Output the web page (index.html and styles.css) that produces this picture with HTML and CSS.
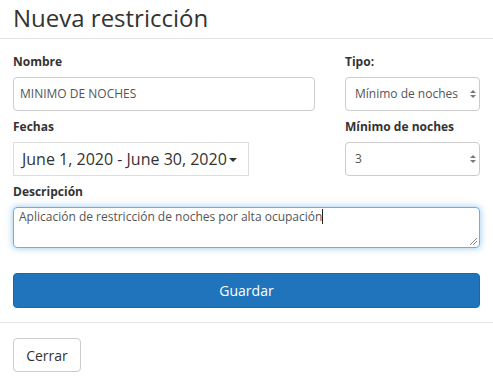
FILE: index.html
```html
<!DOCTYPE html>
<html>

<head>
    <meta charset="utf-8" />
    <title>Nueva restricción</title>
    <meta name="viewport" content="width=device-width, initial-scale=1">
    <link rel="stylesheet" href="styles.css">
</head>

<body>
    <div class="modal-header">
        <h2 class="modal-title">Nueva restricción</h2>
    </div>

    <div class="modal-body">
        <div class="form-row">
            <div class="form-group">
                <label class="lbl">Nombre</label>
                <div class="field">MINIMO DE NOCHES</div>
            </div>
            <div class="form-group">
                <label class="lbl">Tipo:</label>
                <div class="field select">
                    <span>Mínimo de noches</span>
                    <svg class="arrows" width="6" height="8" viewBox="0 0 6 8">
                        <path d="M3 0 L6 3 L0 3 Z" fill="#777" />
                        <path d="M0 5 L6 5 L3 8 Z" fill="#777" />
                    </svg>
                </div>
            </div>
        </div>

        <div class="form-row">
            <div class="form-group">
                <label class="lbl">Fechas</label>
                <div class="dates">
                    <span>June 1, 2020 - June 30, 2020</span><span class="caret"></span>
                </div>
            </div>
            <div class="form-group">
                <label class="lbl">Mínimo de noches</label>
                <div class="field select">
                    <span>3</span>
                    <svg class="arrows" width="6" height="8" viewBox="0 0 6 8">
                        <path d="M3 0 L6 3 L0 3 Z" fill="#777" />
                        <path d="M0 5 L6 5 L3 8 Z" fill="#777" />
                    </svg>
                </div>
            </div>
        </div>

        <div class="form-group">
            <label class="lbl">Descripción</label>
            <div class="textarea">Aplicación de restricción de noches por alta ocupación<span class="cursor"></span>
                <svg class="grip" width="8" height="8" viewBox="0 0 8 8">
                    <path d="M1 8 L8 1 M4 8 L8 4" stroke="#888" stroke-width="1" />
                </svg>
            </div>
        </div>

        <button class="btn btn-primary">Guardar</button>
    </div>

    <div class="modal-footer">
        <button class="btn btn-default">Cerrar</button>
    </div>
</body>

</html>
```

FILE: styles.css
```css
body {
    margin: 0;
    font-family: "Open Sans", "Liberation Sans", sans-serif;
    color: #333;
    background: #fff;
}

.modal-header {
    box-sizing: border-box;
    height: 39px;
    padding: 5px 13px 0;
    border-bottom: 1px solid #e5e5e5;
}

.modal-title {
    margin: 0;
    font-size: 24px;
    font-weight: 400;
    line-height: 26px;
}

.modal-body {
    padding: 14px 13px 14px;
}

.form-row {
    display: grid;
    grid-template-columns: 302px 135px;
    column-gap: 30px;
}

.form-group {
    margin-bottom: 7px;
}

.lbl {
    display: block;
    font-size: 12px;
    font-weight: 700;
    line-height: 18px;
    margin-bottom: 6px;
}

.field {
    box-sizing: border-box;
    height: 34px;
    border: 1px solid #ccc;
    border-radius: 4px;
    padding: 0 6px;
    font-size: 12px;
    line-height: 32px;
    color: #555;
}

.select {
    display: flex;
    justify-content: space-between;
    align-items: center;
    padding: 0 3px 0 9px;
}

.arrows {
    display: block;
}

.dates {
    box-sizing: border-box;
    width: 236px;
    height: 34px;
    border: 1px solid #ddd;
    padding: 0 8px;
    display: flex;
    align-items: center;
    font-size: 16px;
    color: #333;
}

.caret {
    display: inline-block;
    width: 0;
    height: 0;
    margin-left: 2px;
    margin-top: 2px;
    border-top: 4px solid #333;
    border-left: 4px solid transparent;
    border-right: 4px solid transparent;
}

.textarea {
    position: relative;
    box-sizing: border-box;
    height: 41px;
    border: 1px solid #66afe9;
    border-radius: 4px;
    box-shadow: 0 0 7px rgba(102, 175, 233, 0.7);
    padding: 0 5px;
    font-size: 12px;
    line-height: 18px;
    color: #555;
}

.cursor {
    display: inline-block;
    width: 1px;
    height: 15px;
    background: #222;
    vertical-align: -3px;
}

.grip {
    position: absolute;
    right: 2px;
    bottom: 2px;
}

.btn {
    box-sizing: border-box;
    height: 35px;
    border-radius: 4px;
    font-family: "Open Sans", "Liberation Sans", sans-serif;
    font-size: 14px;
    cursor: pointer;
}

.btn-primary {
    display: block;
    width: 100%;
    margin-top: 25px;
    background: #1f74bc;
    border: 1px solid #1b68a9;
    color: #fff;
}

.modal-footer {
    border-top: 1px solid #e5e5e5;
    padding: 15px 13px;
}

.btn-default {
    width: 68px;
    height: 34px;
    background: #fff;
    border: 1px solid #ccc;
    color: #333;
}
```
